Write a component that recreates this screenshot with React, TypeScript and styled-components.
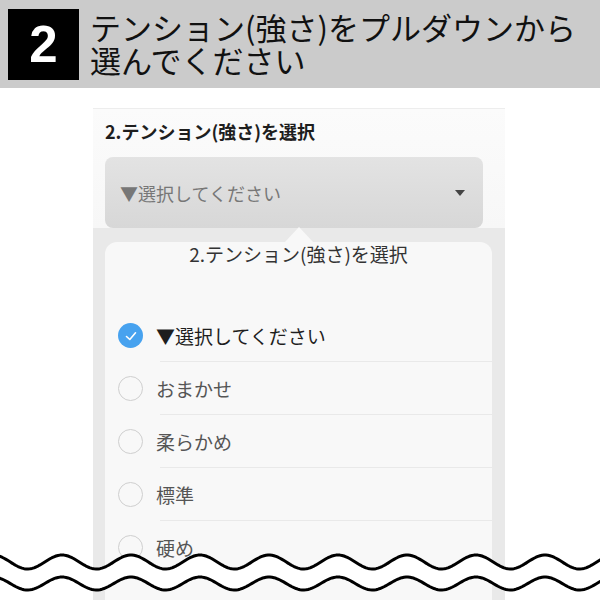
import React from 'react';
import styled, { createGlobalStyle } from 'styled-components';

const Global = createGlobalStyle`
  html, body { margin: 0; padding: 0; background: #fff; }
  body { font-family: "Noto Sans CJK JP", "Noto Sans", sans-serif; }
  * { box-sizing: border-box; }
`;

const Page = styled.div`
  position: relative;
  width: 600px;
  height: 600px;
  overflow: hidden;
  background: #fff;
`;

const Header = styled.header`
  height: 88px;
  background: #cbcbcb;
  display: flex;
  align-items: center;
  padding-left: 8px;
  gap: 11px;
`;

const StepBadge = styled.div`
  width: 71px;
  height: 71px;
  flex: none;
  background: #000;
  color: #fff;
  display: flex;
  align-items: center;
  justify-content: center;
  font-family: "Liberation Sans", Arial, sans-serif;
  font-weight: 700;
  font-size: 51px;
  line-height: 1;
`;

const HeaderTitle = styled.h1`
  margin: -3px 0 0;
  font-weight: 400;
  font-size: 31px;
  color: #111;
  font-family: "Noto Sans CJK JP", sans-serif;
`;

const TitleLine = styled.span`
  display: block;
  line-height: 33px;
  height: 33px;
`;

const Screen = styled.div`
  margin: 20px 0 0 93px;
  width: 412px;
`;

const FormSection = styled.div`
  background: linear-gradient(#fbfbfb, #f7f7f7);
  border-top: 1px solid #ededed;
  padding: 10px 22px 0 12px;
`;

const FieldLabel = styled.div`
  font-size: 18px;
  line-height: 24px;
  font-weight: 700;
  color: #1e1e1e;
  margin-bottom: 14px;
`;

const SelectBox = styled.div`
  height: 71px;
  border-radius: 8px;
  background: linear-gradient(#e3e3e3, #d7d7d7);
  display: flex;
  align-items: center;
  justify-content: space-between;
  padding: 0 18px 0 15px;
  font-size: 18px;
  color: #777;
`;

const Caret = styled.span`
  width: 0;
  height: 0;
  border-left: 5px solid transparent;
  border-right: 5px solid transparent;
  border-top: 6px solid #444;
`;

const Backdrop = styled.div`
  background: #e9e9e9;
  padding: 14px 13px 0 12px;
  height: 400px;
`;

const Sheet = styled.div`
  position: relative;
  background: #f8f8f8;
  border-radius: 12px 12px 0 0;
  height: 100%;
  &::before {
    content: "";
    position: absolute;
    top: -15px;
    left: 50%;
    margin-left: -14px;
    border-left: 14px solid transparent;
    border-right: 14px solid transparent;
    border-bottom: 15px solid #f8f8f8;
  }
`;

const SheetTitle = styled.div`
  text-align: center;
  font-size: 19px;
  line-height: 24px;
  color: #333;
  margin-bottom: 43px;
`;

const OptionList = styled.ul`
  list-style: none;
  margin: 0;
  padding: 0;
`;

const OptionRow = styled.li<{ $checked?: boolean }>`
  position: relative;
  height: 53px;
  display: flex;
  align-items: center;
  gap: 13px;
  padding-left: 13px;
  font-size: 19px;
  color: ${p => (p.$checked ? '#1e1e1e' : '#555')};
  &::after {
    content: "";
    position: absolute;
    left: 55px;
    right: 0;
    bottom: 0;
    height: 1px;
    background: #e9e9e9;
  }
`;

const Radio = styled.span<{ $checked?: boolean }>`
  width: 25px;
  height: 25px;
  flex: none;
  border-radius: 50%;
  display: flex;
  align-items: center;
  justify-content: center;
  background: ${p => (p.$checked ? '#47a2ef' : 'transparent')};
  border: ${p => (p.$checked ? 'none' : '1.5px solid #cfcfcf')};
`;

const WaveLayer = styled.svg`
  position: absolute;
  left: 0;
  top: 545px;
  width: 600px;
  height: 55px;
`;

function wavePoints(cy: number, amp: number): [number, number][] {
  const pts: [number, number][] = [];
  for (let x = -6; x <= 606; x += 2) {
    const y = cy - amp * Math.cos((2 * Math.PI * (x - 62)) / 69);
    pts.push([x, y]);
  }
  return pts;
}

const toPath = (pts: [number, number][]) =>
  pts.map((p, i) => `${i ? 'L' : 'M'}${p[0].toFixed(1)} ${p[1].toFixed(2)}`).join(' ');

const Waves: React.FC = () => {
  const top = wavePoints(17, 7);
  const bottom = wavePoints(38.5, 6.5);
  const fill =
    toPath(top) +
    ' ' +
    bottom
      .slice()
      .reverse()
      .map(p => `L${p[0].toFixed(1)} ${p[1].toFixed(2)}`)
      .join(' ') +
    ' Z';
  return (
    <WaveLayer viewBox="0 0 600 55">
      <path d={fill} fill="#fff" />
      <path d={toPath(top)} fill="none" stroke="#000" strokeWidth={3} strokeLinejoin="round" />
      <path d={toPath(bottom)} fill="none" stroke="#000" strokeWidth={3} strokeLinejoin="round" />
    </WaveLayer>
  );
};

const Check = () => (
  <svg width="14" height="14" viewBox="0 0 14 14">
    <polyline points="2.5,7.5 5.8,10.5 11.5,3.8" fill="none" stroke="#fff" strokeWidth="1.6" strokeLinecap="round" strokeLinejoin="round" />
  </svg>
);

const options = ['▼選択してください', 'おまかせ', '柔らかめ', '標準', '硬め'];

export default function App() {
  return (
    <Page>
      <Global />
      <Header>
        <StepBadge>2</StepBadge>
        <HeaderTitle>
          <TitleLine>テンション(強さ)をプルダウンから</TitleLine>
          <TitleLine>選んでください</TitleLine>
        </HeaderTitle>
      </Header>
      <Screen>
        <FormSection>
          <FieldLabel>2.テンション(強さ)を選択</FieldLabel>
          <SelectBox>
            <span>▼選択してください</span>
            <Caret />
          </SelectBox>
        </FormSection>
        <Backdrop>
          <Sheet>
            <SheetTitle>2.テンション(強さ)を選択</SheetTitle>
            <OptionList>
              {options.map((o, i) => (
                <OptionRow key={o} $checked={i === 0}>
                  <Radio $checked={i === 0}>{i === 0 && <Check />}</Radio>
                  {o}
                </OptionRow>
              ))}
            </OptionList>
          </Sheet>
        </Backdrop>
      </Screen>
      <Waves />
    </Page>
  );
}
